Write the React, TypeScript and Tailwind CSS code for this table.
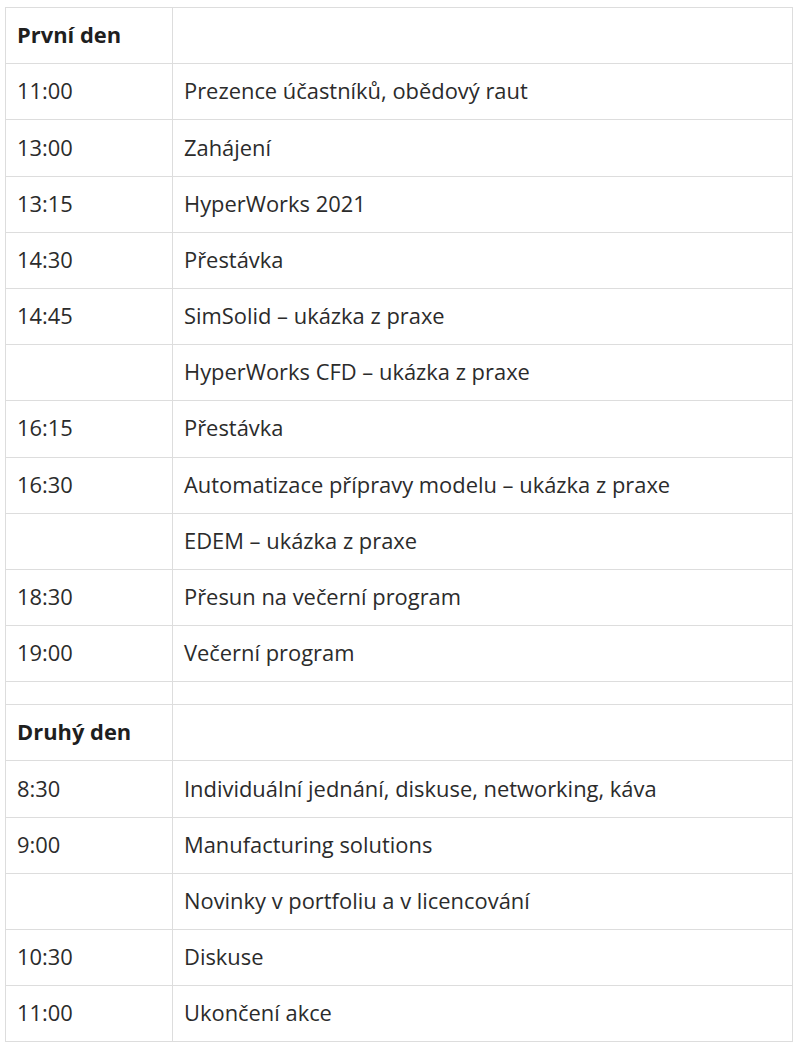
import React from "react";

type Row = { t: string; d: string; bold?: boolean; empty?: boolean };

const rows: Row[] = [
  { t: "První den", d: "", bold: true },
  { t: "11:00", d: "Prezence účastníků, obědový raut" },
  { t: "13:00", d: "Zahájení" },
  { t: "13:15", d: "HyperWorks 2021" },
  { t: "14:30", d: "Přestávka" },
  { t: "14:45", d: "SimSolid – ukázka z praxe" },
  { t: "", d: "HyperWorks CFD – ukázka z praxe" },
  { t: "16:15", d: "Přestávka" },
  { t: "16:30", d: "Automatizace přípravy modelu – ukázka z praxe" },
  { t: "", d: "EDEM – ukázka z praxe" },
  { t: "18:30", d: "Přesun na večerní program" },
  { t: "19:00", d: "Večerní program" },
  { t: "", d: "", empty: true },
  { t: "Druhý den", d: "", bold: true },
  { t: "8:30", d: "Individuální jednání, diskuse, networking, káva" },
  { t: "9:00", d: "Manufacturing solutions" },
  { t: "", d: "Novinky v portfoliu a v licencování" },
  { t: "10:30", d: "Diskuse" },
  { t: "11:00", d: "Ukončení akce" },
];

export default function App() {
  return (
    <div
      className="w-[800px] h-[1052px] bg-white pt-[7px] pl-[5px]"
      style={{ fontFamily: '"Open Sans", "Noto Sans", sans-serif' }}
    >
      <div className="w-[788px] border-t border-l border-[#dddddd] text-[21.9px] text-[#2b2b2b]">
        {rows.map((r, i) => (
          <div
            key={i}
            className={r.empty ? "flex h-[23px]" : "flex h-[56.2px]"}
          >
            <div
              className={
                "w-[167px] shrink-0 border-r border-b border-[#dddddd] pl-[11px] pr-3 flex items-center " +
                (r.bold ? "font-bold text-[#1f1f1f]" : "")
              }
            >
              {r.t}
            </div>
            <div className="flex-1 border-r border-b border-[#dddddd] pl-[11px] pr-3 flex items-center">
              {r.d}
            </div>
          </div>
        ))}
      </div>
    </div>
  );
}
